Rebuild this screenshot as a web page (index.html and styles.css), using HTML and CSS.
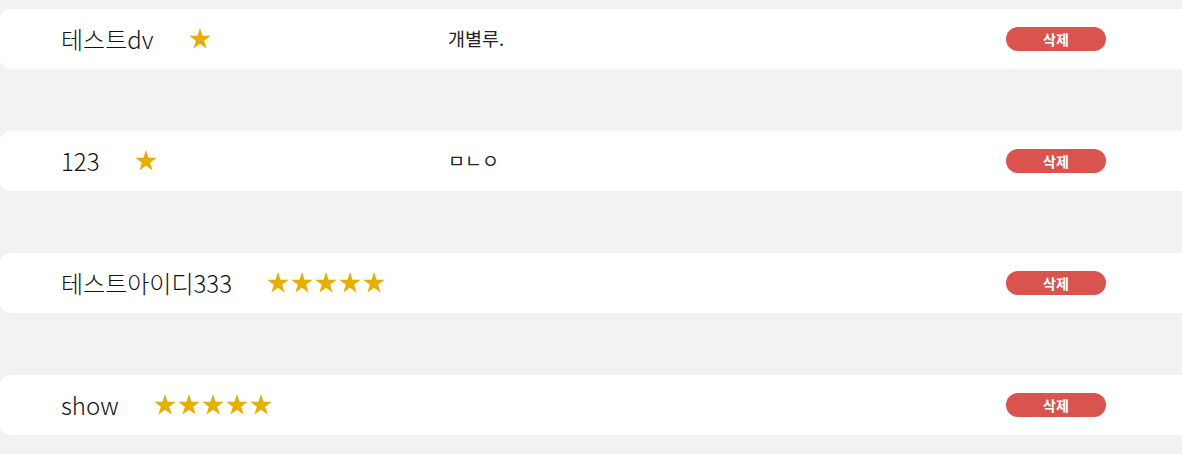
FILE: index.html
```html
<!DOCTYPE html>
<html lang="ko">
<head>
<meta charset="utf-8">
<link rel="stylesheet" href="styles.css">
</head>
<body>
<svg width="0" height="0" class="defs">
  <defs>
    <symbol id="star" viewBox="0 0 24 23">
      <polygon points="12,0 14.8,8.6 23.8,8.6 16.5,13.9 19.3,22.5 12,17.2 4.7,22.5 7.5,13.9 0.2,8.6 9.2,8.6"/>
    </symbol>
  </defs>
</svg>
<ul class="review-list">
  <li class="review">
    <div class="who">
      <span class="name">테스트dv</span>
      <span class="stars"><svg class="star"><use href="#star"/></svg></span>
    </div>
    <div class="comment">개별루.</div>
    <button class="del">삭제</button>
  </li>
  <li class="review">
    <div class="who">
      <span class="name">123</span>
      <span class="stars"><svg class="star"><use href="#star"/></svg></span>
    </div>
    <div class="comment">ㅁㄴㅇ</div>
    <button class="del">삭제</button>
  </li>
  <li class="review">
    <div class="who">
      <span class="name">테스트아이디333</span>
      <span class="stars"><svg class="star"><use href="#star"/></svg><svg class="star"><use href="#star"/></svg><svg class="star"><use href="#star"/></svg><svg class="star"><use href="#star"/></svg><svg class="star"><use href="#star"/></svg></span>
    </div>
    <div class="comment"></div>
    <button class="del">삭제</button>
  </li>
  <li class="review">
    <div class="who">
      <span class="name">show</span>
      <span class="stars"><svg class="star"><use href="#star"/></svg><svg class="star"><use href="#star"/></svg><svg class="star"><use href="#star"/></svg><svg class="star"><use href="#star"/></svg><svg class="star"><use href="#star"/></svg></span>
    </div>
    <div class="comment"></div>
    <button class="del">삭제</button>
  </li>
</ul>
</body>
</html>
```

FILE: styles.css
```css
html, body {
  margin: 0;
  padding: 0;
  background: #f2f2f2;
  overflow: hidden;
}
body {
  font-family: "Noto Sans CJK KR", "Noto Sans", sans-serif;
  color: #333;
}
.defs {
  position: absolute;
  width: 0;
  height: 0;
}
.review-list {
  list-style: none;
  margin: 0;
  padding: 9px 0 0 0;
  display: flex;
  flex-direction: column;
  gap: 62px;
}
.review {
  height: 60px;
  background: #fff;
  border-radius: 10px 0 0 10px;
  display: grid;
  grid-template-columns: 387px 1fr 100px;
  align-items: center;
  padding: 0 76px 0 61px;
}
.who {
  display: flex;
  align-items: center;
}
.name {
  font-size: 24px;
  font-weight: 300;
  color: #111;
  line-height: 1;
}
.stars {
  display: flex;
  gap: 2px;
  margin-left: 35px;
  margin-top: -1px;
}
.star {
  width: 22px;
  height: 21px;
  fill: #e6ae00;
}
.comment {
  font-size: 18.5px;
  color: #222;
  margin-top: -2px;
}
.del {
  width: 100px;
  height: 24px;
  border: none;
  border-radius: 12px;
  background: #d9534f;
  color: #fff;
  font-family: "Noto Sans CJK KR", sans-serif;
  font-weight: 700;
  font-size: 14px;
  padding: 0;
  margin-top: -1px;
  cursor: pointer;
}
```
